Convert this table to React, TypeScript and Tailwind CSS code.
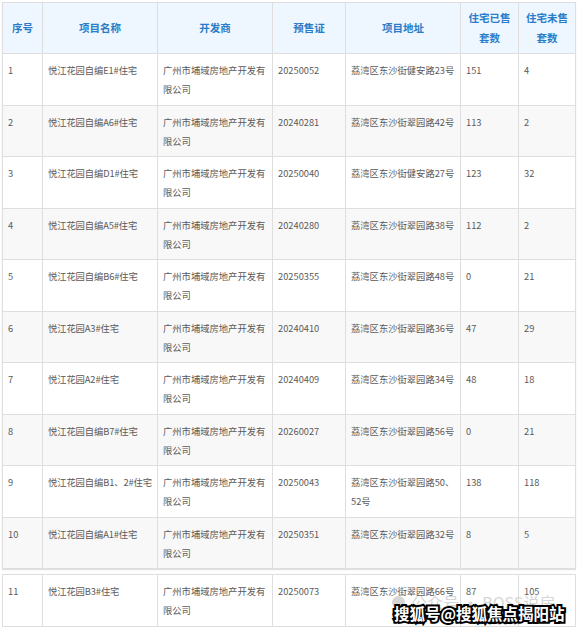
const rows = [
  ["1", "悦江花园自编E1#住宅", "20250052", "荔湾区东沙街健安路23号", "151", "4"],
  ["2", "悦江花园自编A6#住宅", "20240281", "荔湾区东沙街翠园路42号", "113", "2"],
  ["3", "悦江花园自编D1#住宅", "20250040", "荔湾区东沙街健安路27号", "123", "32"],
  ["4", "悦江花园自编A5#住宅", "20240280", "荔湾区东沙街翠园路38号", "112", "2"],
  ["5", "悦江花园自编B6#住宅", "20250355", "荔湾区东沙街翠园路48号", "0", "21"],
  ["6", "悦江花园A3#住宅", "20240410", "荔湾区东沙街翠园路36号", "47", "29"],
  ["7", "悦江花园A2#住宅", "20240409", "荔湾区东沙街翠园路34号", "48", "18"],
  ["8", "悦江花园自编B7#住宅", "20260027", "荔湾区东沙街翠园路56号", "0", "21"],
  ["9", "悦江花园自编B1、2#住宅", "20250043", "荔湾区东沙街翠园路50、52号", "138", "118"],
  ["10", "悦江花园自编A1#住宅", "20250351", "荔湾区东沙街翠园路32号", "8", "5"],
];

const last = ["11", "悦江花园B3#住宅", "20250073", "荔湾区东沙街翠园路66号", "87", "105"];

const dev = "广州市埔域房地产开发有限公司";

function Cols() {
  return (
    <colgroup>
      <col className="w-[40px]" />
      <col className="w-[115px]" />
      <col className="w-[115px]" />
      <col className="w-[73px]" />
      <col className="w-[115px]" />
      <col className="w-[58px]" />
      <col className="w-[57px]" />
    </colgroup>
  );
}

function Row({ r, shade }: { r: string[]; shade: boolean }) {
  const td = "border border-[#dedede] px-[5px] pt-[7px] pb-[5.5px] align-top";
  return (
    <tr className={shade ? "bg-[#f8f8f8]" : "bg-white"}>
      <td className={td}>{r[0]}</td>
      <td className={td + " whitespace-nowrap tracking-[-0.1px]"}>{r[1]}</td>
      <td className={td}>{dev}</td>
      <td className={td}>{r[2]}</td>
      <td className={td}>{r[3]}</td>
      <td className={td}>{r[4]}</td>
      <td className={td}>{r[5]}</td>
    </tr>
  );
}

export default function App() {
  const th = "border border-[#dedede] px-[4px] py-[5px] text-center align-middle font-bold";
  return (
    <div
      className="relative w-[578px] h-[629px] overflow-hidden bg-white text-[9.3px] leading-[19px] text-[#5a5a5a]"
      style={{ fontFamily: '"Noto Sans CJK SC", "Noto Sans", sans-serif' }}
    >
      <div className="pl-[2px] pt-[2px]">
        <table className="w-[573px] table-fixed border-collapse shadow-[0_1px_1px_rgba(0,0,0,0.12)]">
          <Cols />
          <thead>
            <tr className="bg-[#eef7ff] text-[10.5px] leading-[20px] text-[#2a7cc8]">
              <th className={th}>序号</th>
              <th className={th}>项目名称</th>
              <th className={th}>开发商</th>
              <th className={th}>预售证</th>
              <th className={th}>项目地址</th>
              <th className={th}>住宅已售套数</th>
              <th className={th}>住宅未售套数</th>
            </tr>
          </thead>
          <tbody>
            {rows.map((r, i) => (
              <Row key={r[0]} r={r} shade={i % 2 === 1} />
            ))}
          </tbody>
        </table>

        <table className="mt-[5px] w-[573px] table-fixed border-collapse">
          <Cols />
          <tbody>
            <Row r={last} shade={false} />
          </tbody>
        </table>
      </div>

      {/* watermarks */}
      <div className="absolute left-[392px] top-[593px] flex items-center gap-[6px] text-[16px] leading-[18px] text-[#d6d6d6]">
        <span className="inline-block h-[13px] w-[13px] rounded-full bg-[#d6d6d6]" />
        <span>公众号 · BOSS说房</span>
      </div>
      <div className="absolute left-[394px] top-[602px] text-[15.5px] leading-[22px] font-bold text-white [-webkit-text-stroke:4px_#000] [paint-order:stroke_fill]">
        搜狐号@搜狐焦点揭阳站
      </div>
    </div>
  );
}
